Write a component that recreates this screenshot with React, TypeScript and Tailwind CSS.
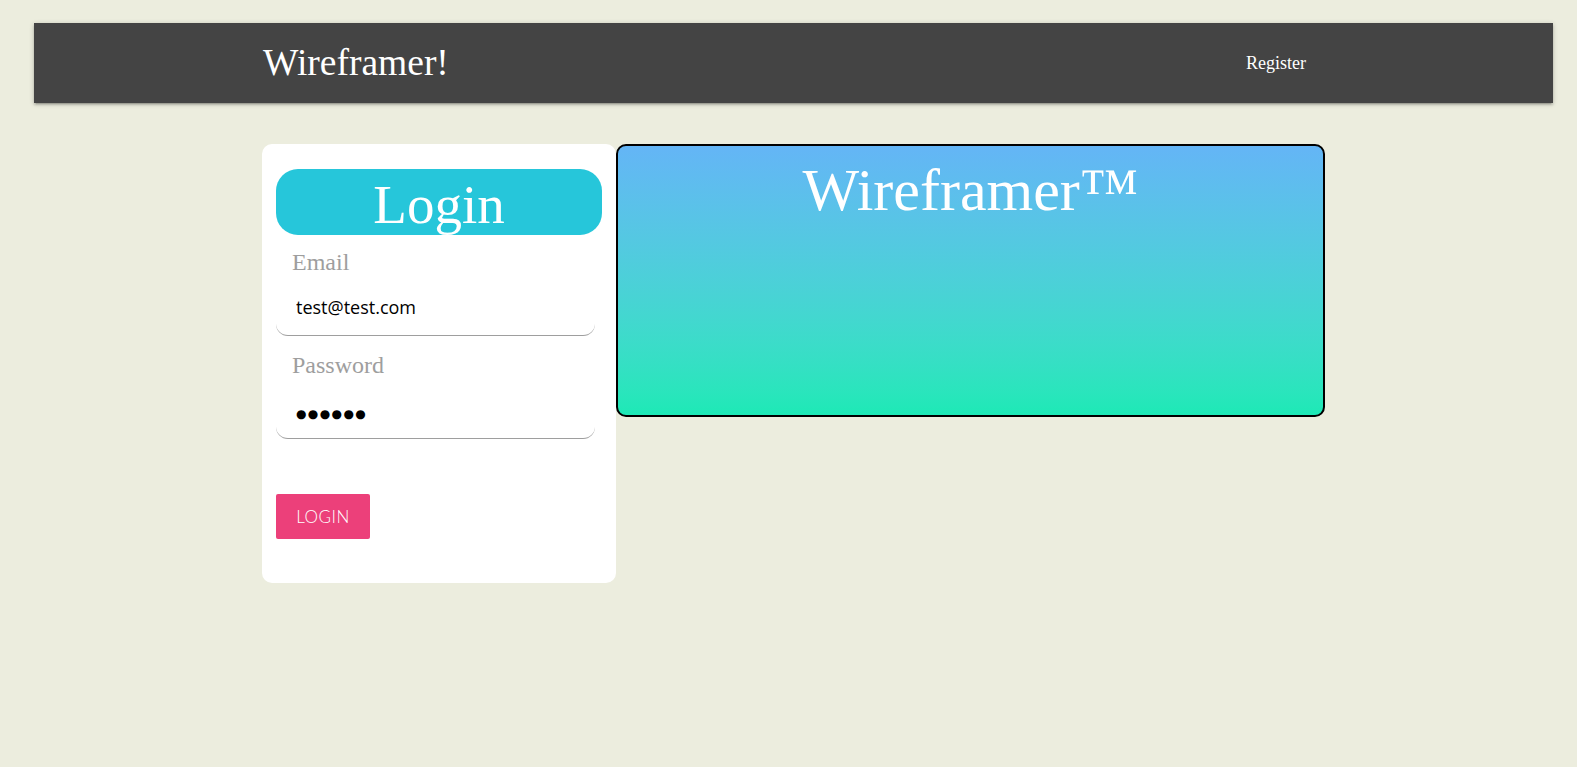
export default function App() {
  const serif = { fontFamily: '"Liberation Serif", "Times New Roman", serif' };
  return (
    <div className="min-h-[767px] w-full bg-[#ecedde] pt-[23px]" style={serif}>
      <nav className="ml-[34px] w-[1519px] h-[80px] bg-[#444444] text-white shadow-[0_2px_2px_0_rgba(0,0,0,0.14),0_3px_1px_-2px_rgba(0,0,0,0.12),0_1px_5px_0_rgba(0,0,0,0.2)]">
        <div className="mx-auto w-[1063px] h-full flex items-center justify-between leading-[80px]">
          <a className="ml-[1px] text-[37.5px] leading-[80px] whitespace-nowrap">Wireframer!</a>
          <a className="text-[18px] leading-[80px] mr-[19px]">Register</a>
        </div>
      </nav>
      <div className="ml-[34px] w-[1519px] pt-[41px]">
        <div className="mx-auto w-[1063px] flex items-start">
          <div className="w-[354px] shrink-0 bg-white rounded-[10px] px-[14px] pt-[25px] pb-[44px]">
            <div className="h-[66px] rounded-[22px] bg-[#26c6da] text-white text-center text-[55px] leading-[71px]">
              Login
            </div>
            <div className="mt-[13px]">
              <div className="pl-[16px] text-[24px] leading-[28px] text-[#9e9e9e]">Email</div>
              <input
                readOnly
                value="test@test.com"
                className="block w-[319px] h-[60px] pt-[3px] pl-[20px] border-b border-[#9e9e9e] rounded-[12px] bg-transparent outline-none text-[18px] text-black"
                style={{ fontFamily: '"Open Sans", sans-serif' }}
              />
            </div>
            <div className="mt-[15px]">
              <div className="pl-[16px] text-[24px] leading-[28px] text-[#9e9e9e]">Password</div>
              <div
                className="flex items-center w-[319px] h-[60px] pt-[10px] pl-[20px] border-b border-[#9e9e9e] rounded-[12px] text-black text-[12px] tracking-[1.4px]"
                style={{ fontFamily: '"DejaVu Sans", sans-serif' }}
              >
                ●●●●●●
              </div>
            </div>
            <button
              className="mt-[55px] block w-[94px] h-[45px] rounded-[2px] bg-[#ec407a] text-white text-[17px] font-light tracking-[0.5px]"
              style={{ fontFamily: 'Lato, "Open Sans", sans-serif' }}
            >
              LOGIN
            </button>
          </div>
          <div className="w-[709px] h-[273px] border-2 border-black rounded-[10px] bg-gradient-to-b from-[#64b5f6] to-[#1de9b6] text-center text-white">
            <h1 className="pt-[14px] text-[60px] leading-[60px]">Wireframer™</h1>
          </div>
        </div>
      </div>
    </div>
  );
}
